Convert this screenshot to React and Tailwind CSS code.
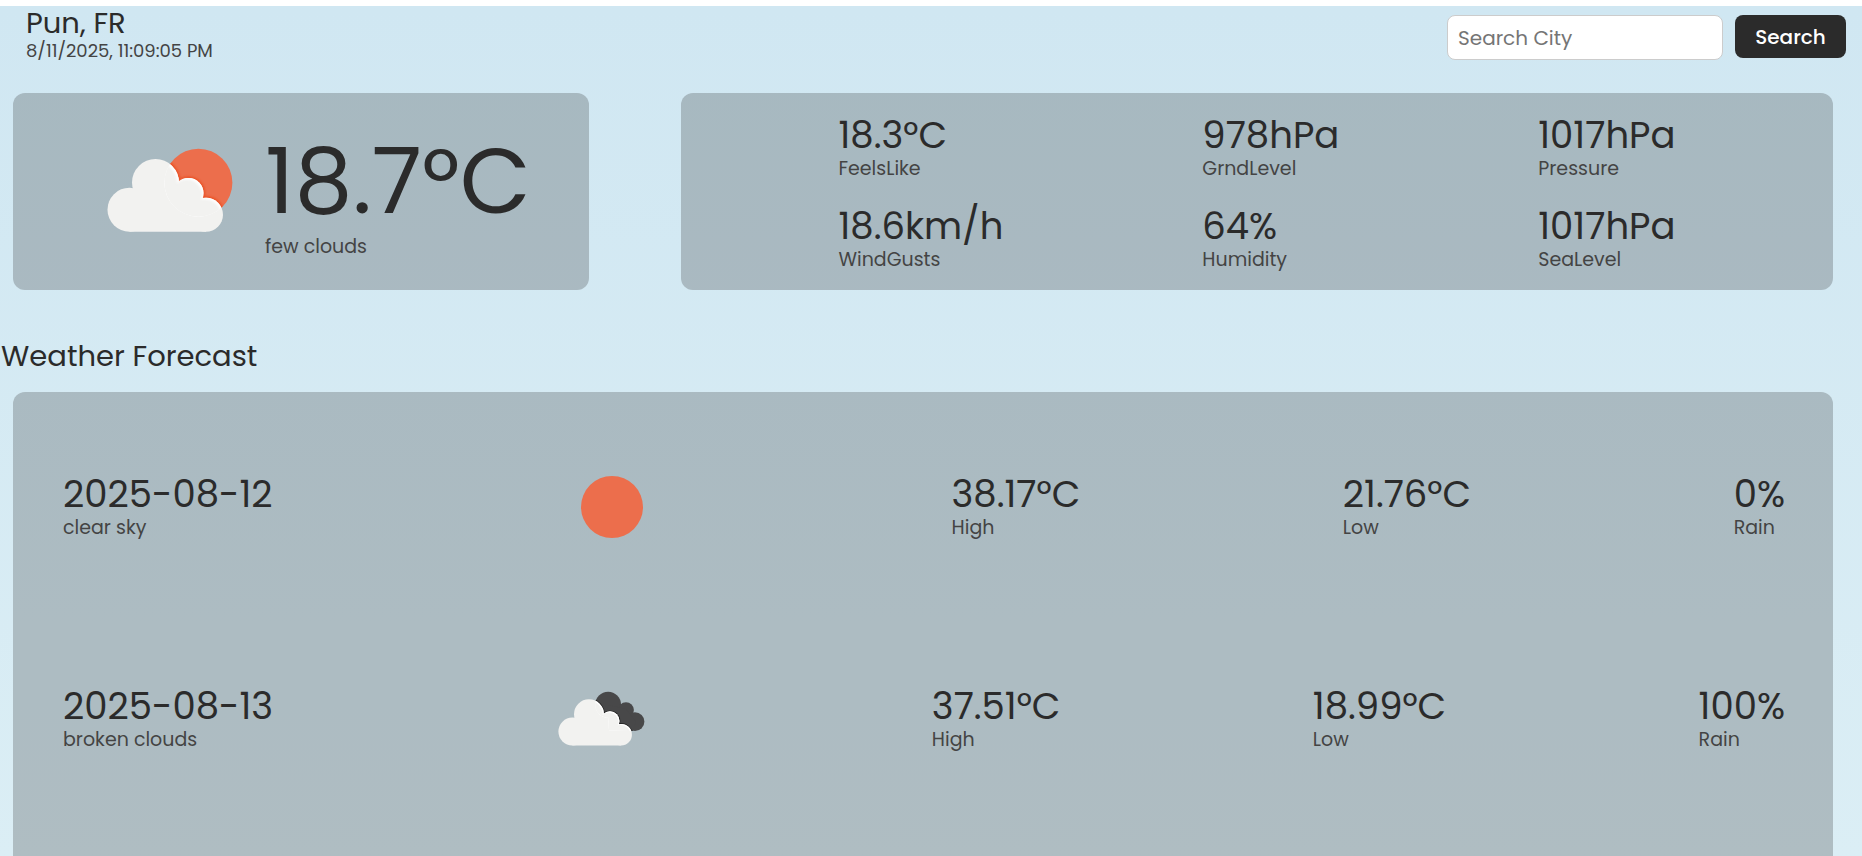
import { useId } from "react";

const metrics = [
  { value: "18.3°C", label: "FeelsLike" },
  { value: "978hPa", label: "GrndLevel" },
  { value: "1017hPa", label: "Pressure" },
  { value: "18.6km/h", label: "WindGusts" },
  { value: "64%", label: "Humidity" },
  { value: "1017hPa", label: "SeaLevel" },
];

const forecast = [
  { date: "2025-08-12", sky: "clear sky", icon: "sun", high: "38.17°C", low: "21.76°C", rain: "0%" },
  { date: "2025-08-13", sky: "broken clouds", icon: "clouds", high: "37.51°C", low: "18.99°C", rain: "100%" },
];

function FrontCloud() {
  return (
    <>
      <circle cx="22.5" cy="61.7" r="22" />
      <circle cx="48.5" cy="34.5" r="23.5" />
      <circle cx="81.5" cy="45" r="15" />
      <circle cx="99" cy="66.7" r="17" />
      <path d="M22.5 83.7V58L30 45L48 30L72 36L82 45L99 62V83.7Z" />
    </>
  );
}

function BackCloud() {
  return (
    <>
      <circle cx="78.6" cy="19.6" r="20.3" />
      <circle cx="106.7" cy="28" r="12.4" />
      <circle cx="120.8" cy="46.2" r="14.8" />
      <path d="M78 20L106 26L122 46L118 61L80 60Z" />
    </>
  );
}

/* A white cloud in front of another shape, with a soft shadow and a lit rim where they overlap. */
function CloudyIcon({ shape, color, shade, viewBox, className }) {
  const id = useId();
  return (
    <svg viewBox={viewBox} className={className} aria-hidden="true">
      <defs>
        <clipPath id={id + "c"}>{shape}</clipPath>
        <filter id={id + "b"}>
          <feGaussianBlur stdDeviation="0.8" />
        </filter>
      </defs>
      <g fill={color}>{shape}</g>
      <g clipPath={`url(#${id}c)`}>
        <g filter={`url(#${id}b)`} fill={shade} stroke={shade} strokeWidth="3">
          <FrontCloud />
        </g>
      </g>
      <g fill="#f2f2f0">
        <FrontCloud />
      </g>
      <g clipPath={`url(#${id}c)`}>
        <g fill="#ffffff">
          <FrontCloud />
        </g>
        <g fill="#f2f2f0" transform="translate(-1.6 1.6)" filter={`url(#${id}b)`}>
          <FrontCloud />
        </g>
      </g>
    </svg>
  );
}

function FewClouds() {
  return (
    <CloudyIcon
      viewBox="0 0 126 84"
      className="h-[84px] w-[126px] shrink-0"
      color="#ec6e4c"
      shade="#ea4f24"
      shape={<circle cx="91.4" cy="34.7" r="34" />}
    />
  );
}

function BrokenClouds() {
  return (
    <CloudyIcon
      viewBox="0 -2 138 88"
      className="h-14 w-[88px]"
      color="#484849"
      shade="#262626"
      shape={<BackCloud />}
    />
  );
}

function Sun() {
  return (
    <svg viewBox="0 0 62 62" className="size-[62px]" aria-hidden="true">
      <circle cx="31" cy="31" r="31" fill="#ec6e4c" />
    </svg>
  );
}

function Stat({ value, label }) {
  return (
    <div>
      <p className="text-[37px] leading-[42px]">{value}</p>
      <p className="text-[19px] leading-[26px] text-[#444444]">{label}</p>
    </div>
  );
}

export default function App() {
  return (
    <div className="flex min-h-screen flex-col bg-white pt-1.5 font-['Poppins','Inter',sans-serif] text-[#2b2b2b]">
      <div className="flex flex-1 flex-col bg-linear-to-b from-[#d0e7f2] to-[#dbeef5]">
        <header className="flex h-[87px] items-start justify-between pr-4 pl-[26px]">
          <div>
            <h1 className="text-[29px] leading-[34px]">Pun, FR</h1>
            <p className="text-lg leading-[22px] text-[#444444]">8/11/2025, 11:09:05 PM</p>
          </div>
          <form className="flex items-start gap-3 pt-[9px]" onSubmit={(e) => e.preventDefault()}>
            <input
              type="text"
              aria-label="Search City"
              placeholder="Search City"
              className="h-[45px] w-[276px] rounded-lg border border-[#cccccc] bg-white px-2.5 text-xl placeholder:text-[#757575]"
            />
            <button type="submit" className="h-[43px] w-[111px] rounded-lg bg-[#2b2b2b] text-xl font-medium text-white">
              Search
            </button>
          </form>
        </header>

        <main className="flex flex-1 flex-col">
          <div className="mr-[29px] ml-[13px] grid grid-cols-[1fr_2fr] gap-[92px]">
            <section className="flex h-[197px] items-center gap-8 rounded-xl bg-[#2b2b2b]/25 pb-1 pl-[94px]">
              <FewClouds />
              <div className="pt-[18px]">
                <p className="text-[92px] leading-[96px]">18.7°C</p>
                <p className="text-[19px] leading-9 text-[#444444]">few clouds</p>
              </div>
            </section>
            <section className="grid grid-cols-[repeat(3,auto)] content-center justify-around gap-y-[23px] rounded-xl bg-[#2b2b2b]/25 px-[58px] pt-1">
              {metrics.map((m) => (
                <Stat key={m.label} {...m} />
              ))}
            </section>
          </div>

          <h2 className="mt-11 ml-px text-[29px] leading-[44px]">Weather Forecast</h2>

          <section className="mt-3.5 mr-[29px] ml-[13px] flex-1 rounded-t-xl bg-[#2b2b2b]/25 pt-[9px] pr-12 pl-[50px]">
            {forecast.map((day) => (
              <div key={day.date} className="flex h-[212px] items-center justify-between">
                <Stat value={day.date} label={day.sky} />
                <div className="flex w-[154px] justify-center">
                  {day.icon === "sun" ? <Sun /> : <BrokenClouds />}
                </div>
                <Stat value={day.high} label="High" />
                <Stat value={day.low} label="Low" />
                <Stat value={day.rain} label="Rain" />
              </div>
            ))}
          </section>
        </main>
      </div>
    </div>
  );
}
